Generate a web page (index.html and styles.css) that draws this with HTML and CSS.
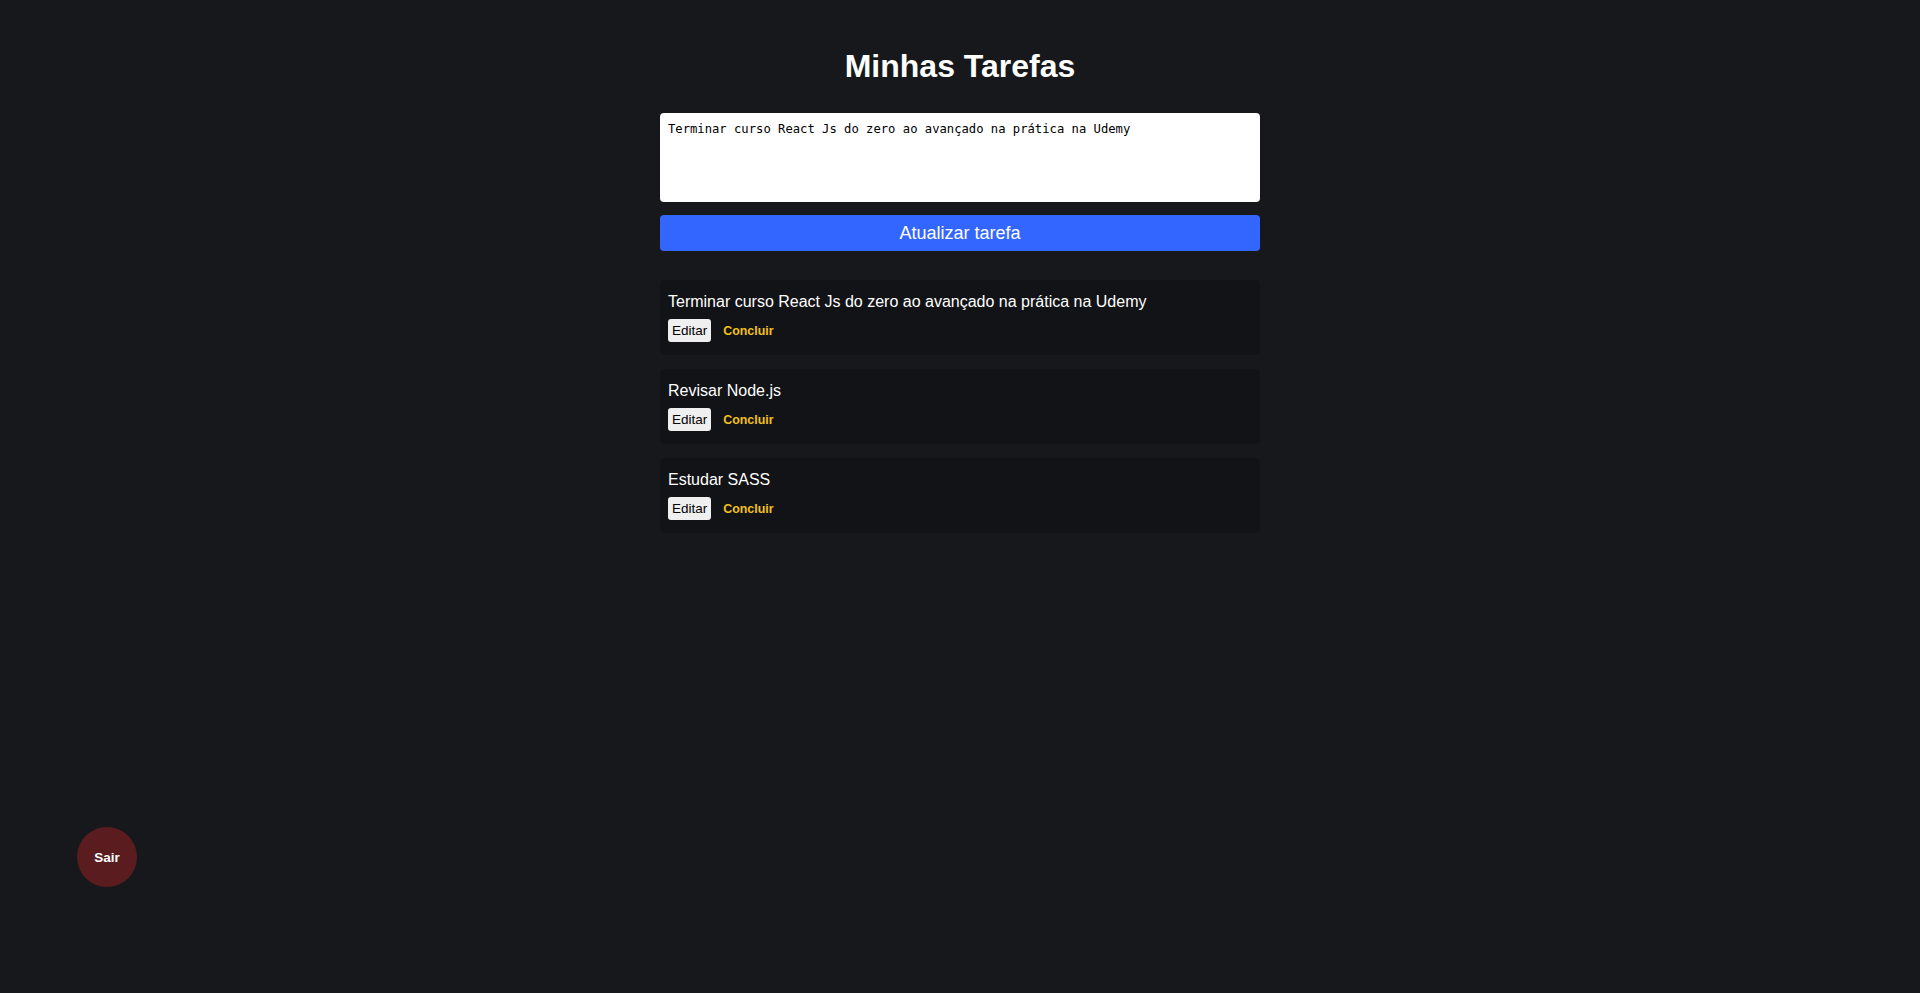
FILE: index.html
```html
<!DOCTYPE html>
<html lang="pt-BR">
<head>
<meta charset="utf-8">
<title>Minhas Tarefas</title>
<link rel="stylesheet" href="styles.css">
</head>
<body>
<main class="app">
  <h1 class="title">Minhas Tarefas</h1>
  <form class="task-form">
    <textarea class="task-input">Terminar curso React Js do zero ao avançado na prática na Udemy</textarea>
    <button type="button" class="submit-btn">Atualizar tarefa</button>
  </form>
  <ul class="task-list">
    <li class="task">
      <p class="task-text">Terminar curso React Js do zero ao avançado na prática na Udemy</p>
      <div class="task-actions">
        <button type="button" class="edit-btn">Editar</button>
        <button type="button" class="done-btn">Concluir</button>
      </div>
    </li>
    <li class="task">
      <p class="task-text">Revisar Node.js</p>
      <div class="task-actions">
        <button type="button" class="edit-btn">Editar</button>
        <button type="button" class="done-btn">Concluir</button>
      </div>
    </li>
    <li class="task">
      <p class="task-text">Estudar SASS</p>
      <div class="task-actions">
        <button type="button" class="edit-btn">Editar</button>
        <button type="button" class="done-btn">Concluir</button>
      </div>
    </li>
  </ul>
</main>
<button type="button" class="logout-btn">Sair</button>
</body>
</html>
```

FILE: styles.css
```css
* {
  box-sizing: border-box;
}

html, body {
  margin: 0;
  padding: 0;
  background: #17181c;
  min-height: 100%;
}

body {
  font-family: "Liberation Sans", Arial, sans-serif;
  color: #ffffff;
}

.app {
  width: 600px;
  margin: 0 auto;
  padding-top: 48px;
  display: flex;
  flex-direction: column;
}

.title {
  margin: 0 0 28px;
  font-size: 32px;
  line-height: 37px;
  font-weight: 700;
  text-align: center;
  color: #ffffff;
}

.task-form {
  display: flex;
  flex-direction: column;
  gap: 13px;
}

.task-input {
  display: block;
  width: 100%;
  height: 89px;
  border: none;
  border-radius: 4px;
  padding: 9px 8px;
  background: #ffffff;
  color: #000000;
  font-family: "DejaVu Sans Mono", "Liberation Mono", monospace;
  font-size: 12.2px;
  line-height: 14px;
  resize: none;
  outline: none;
}

.submit-btn {
  height: 36px;
  border: none;
  border-radius: 4px;
  background: #3366ff;
  color: #ffffff;
  font-family: "Liberation Sans", Arial, sans-serif;
  font-size: 18px;
  padding: 0;
  cursor: pointer;
}

.task-list {
  list-style: none;
  margin: 29px 0 0;
  padding: 0;
  display: flex;
  flex-direction: column;
  gap: 14px;
}

.task {
  background: #121316;
  border-radius: 5px;
  padding: 13px 8px 13px;
  display: flex;
  flex-direction: column;
  gap: 8px;
}

.task-text {
  margin: 0;
  font-size: 16px;
  line-height: 18px;
  color: #ffffff;
}

.task-actions {
  display: flex;
  align-items: center;
  gap: 12px;
}

.edit-btn {
  height: 23px;
  border: none;
  border-radius: 3px;
  padding: 0 4px;
  background: #efefef;
  color: #000000;
  font-family: "Liberation Sans", Arial, sans-serif;
  font-size: 13.5px;
  cursor: pointer;
}

.done-btn {
  border: none;
  background: transparent;
  padding: 0;
  color: #f2c01c;
  font-family: "Liberation Sans", Arial, sans-serif;
  font-size: 12.4px;
  font-weight: 700;
  cursor: pointer;
}

.logout-btn {
  position: fixed;
  left: 77px;
  top: 827px;
  width: 60px;
  height: 60px;
  border: none;
  border-radius: 50%;
  background: #5a1c1f;
  color: #ffffff;
  font-family: "Liberation Sans", Arial, sans-serif;
  font-size: 13.5px;
  font-weight: 700;
  padding: 0;
  cursor: pointer;
}
```
